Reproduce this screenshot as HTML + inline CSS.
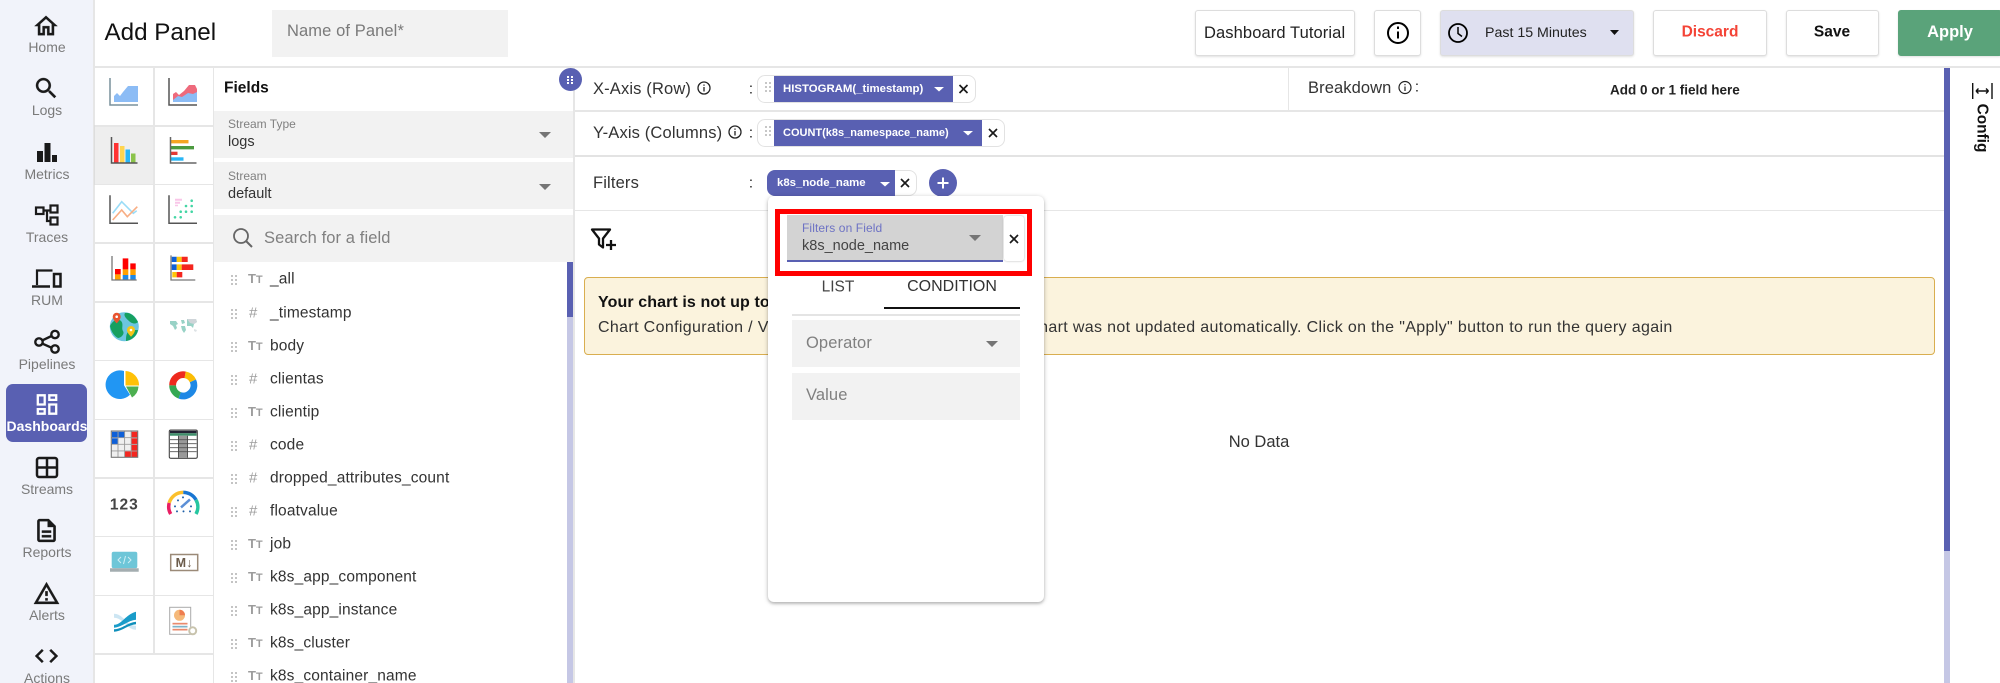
<!DOCTYPE html>
<html lang="en"><head><meta charset="utf-8"><title>Add Panel</title>
<style>
html,body{margin:0;padding:0;background:#fff}
#p{position:relative;width:2000px;height:683px;overflow:hidden;background:#fff;font-family:"Liberation Sans",sans-serif;color:#222;filter:blur(.35px)}
.a{position:absolute}
.t{position:absolute;white-space:nowrap;line-height:1;transform:translateY(-50%)}
.c{transform:translate(-50%,-50%)}
.btn{position:absolute;top:10px;height:46px;box-sizing:border-box;border:1px solid #ddd;border-radius:3px;background:#fff;box-shadow:0 1px 2px rgba(0,0,0,.12)}
.nav{position:absolute;left:0;width:94px;text-align:center;font-size:14px;line-height:1;color:#7a7a7a;transform:translateY(-50%)}
.f{font-size:15.5px;letter-spacing:.15px;color:#333}
.g{font-size:13px;color:#9c9c9c}
.box{position:absolute;background:#f2f2f2}
.chip{position:absolute;background:#5960b2;color:#fff;font-size:11.4px;font-weight:bold}
svg{position:absolute;left:0;top:0;overflow:visible}
</style></head><body><div id="p">

<div class="a" style="left:0;top:0;width:93px;height:683px;background:#f1f3fa;border-right:2px solid #e6e6e6"></div>
<div class="a" style="left:6px;top:384px;width:81px;height:58px;background:#5960b2;border-radius:7px"></div>

<div class="nav" style="top:47px">Home</div>
<div class="nav" style="top:110px">Logs</div>
<div class="nav" style="top:174px">Metrics</div>
<div class="nav" style="top:237px">Traces</div>
<div class="nav" style="top:300px">RUM</div>
<div class="nav" style="top:364px">Pipelines</div>
<div class="nav" style="top:426px;color:#fff;font-weight:bold;font-size:14px">Dashboards</div>
<div class="nav" style="top:489px">Streams</div>
<div class="nav" style="top:552px">Reports</div>
<div class="nav" style="top:615px">Alerts</div>
<div class="nav" style="top:678px">Actions</div>

<!-- header -->
<div class="t" style="left:104.500px;top:33px;font-size:24.200px;color:#111">Add Panel</div>
<div class="box" style="left:272px;top:10px;width:236px;height:47px"></div>
<div class="t" style="left:287px;top:31px;font-size:16.500px;letter-spacing:.1px;color:#7a7a7a">Name of Panel*</div>
<div class="a" style="left:94px;top:66px;width:1906px;height:2px;background:#e6e6e6"></div>

<div class="btn" style="left:1195px;width:160px"></div>
<div class="t" style="left:1204px;top:33px;font-size:16.500px;letter-spacing:.1px;color:#222">Dashboard Tutorial</div>
<div class="btn" style="left:1374px;width:47px"></div>
<div class="btn" style="left:1440px;width:194px;background:#dfe0f0"></div>
<div class="t" style="left:1485px;top:33px;font-size:14.200px;color:#222">Past 15 Minutes</div>
<div class="btn" style="left:1653px;width:114px"></div>
<div class="t c" style="left:1710px;top:32px;font-size:15.500px;font-weight:bold;color:#f44336">Discard</div>
<div class="btn" style="left:1786px;width:93px"></div>
<div class="t c" style="left:1832px;top:32px;font-size:15.500px;font-weight:bold;color:#111">Save</div>
<div class="btn" style="left:1898px;width:104px;background:#5aa37a;border-color:#5aa37a"></div>
<div class="t c" style="left:1950px;top:32px;font-size:16.500px;font-weight:bold;color:#fff">Apply</div>

<!-- grid lines -->
<div class="a" style="left:95px;top:68px;width:119px;height:587px;border-bottom:2px solid #e6e6e6;box-sizing:border-box"></div>
<div class="a" style="left:95px;top:126px;width:58px;height:58px;background:#eee;outline:1px solid #ddd"></div>
<div class="a" style="left:152.500px;top:68px;width:2px;height:587px;background:#e6e6e6"></div>
<div class="a" style="left:212.500px;top:68px;width:1.500px;height:615px;background:#e6e6e6"></div>
<div class="a" style="left:95px;top:125px;width:118px;height:1.600px;background:#e6e6e6"></div>
<div class="a" style="left:95px;top:183.700px;width:118px;height:1.600px;background:#e6e6e6"></div>
<div class="a" style="left:95px;top:242.400px;width:118px;height:1.600px;background:#e6e6e6"></div>
<div class="a" style="left:95px;top:301px;width:118px;height:1.600px;background:#e6e6e6"></div>
<div class="a" style="left:95px;top:359.800px;width:118px;height:1.600px;background:#e6e6e6"></div>
<div class="a" style="left:95px;top:418.500px;width:118px;height:1.600px;background:#e6e6e6"></div>
<div class="a" style="left:95px;top:477.200px;width:118px;height:1.600px;background:#e6e6e6"></div>
<div class="a" style="left:95px;top:535.900px;width:118px;height:1.600px;background:#e6e6e6"></div>
<div class="a" style="left:95px;top:594.600px;width:118px;height:1.600px;background:#e6e6e6"></div>

<!-- fields -->
<div class="t" style="left:224px;top:88px;font-size:15.500px;font-weight:bold;color:#111">Fields</div>
<div class="box" style="left:214px;top:111px;width:359px;height:47px"></div>
<div class="box" style="left:214px;top:162px;width:359px;height:47px"></div>
<div class="box" style="left:214px;top:215px;width:359px;height:47px"></div>
<div class="t" style="left:228px;top:124px;font-size:12px;color:#808080">Stream Type</div>
<div class="t" style="left:228px;top:141.500px;font-size:14.500px;color:#333">logs</div>
<div class="t" style="left:228px;top:176px;font-size:12px;color:#808080">Stream</div>
<div class="t" style="left:228px;top:194px;font-size:14.500px;color:#333">default</div>
<div class="t" style="left:264px;top:238px;font-size:16.500px;letter-spacing:.1px;color:#808080">Search for a field</div>
<div class="a" style="left:567px;top:262px;width:6px;height:421px;background:#c5c7e5"></div>
<div class="a" style="left:567px;top:262px;width:6px;height:55px;background:#5960b2"></div>
<div class="a" style="left:573px;top:68px;width:2px;height:615px;background:#e6e6e6"></div>
<div class="a" style="left:559px;top:68px;width:23px;height:23px;border-radius:50%;background:#5960b2"></div>

<div class="t g" style="left:248px;top:279px;font-weight:bold">T<small>T</small></div><div class="t f" style="left:270px;top:279px">_all</div>
<div class="t g" style="left:249px;top:313px;font-size:15px">#</div><div class="t f" style="left:270px;top:312.500px">_timestamp</div>
<div class="t g" style="left:248px;top:346px;font-weight:bold">T<small>T</small></div><div class="t f" style="left:270px;top:346px">body</div>
<div class="t g" style="left:249px;top:379px;font-size:15px">#</div><div class="t f" style="left:270px;top:379px">clientas</div>
<div class="t g" style="left:248px;top:412px;font-weight:bold">T<small>T</small></div><div class="t f" style="left:270px;top:412px">clientip</div>
<div class="t g" style="left:249px;top:445px;font-size:15px">#</div><div class="t f" style="left:270px;top:445px">code</div>
<div class="t g" style="left:249px;top:478px;font-size:15px">#</div><div class="t f" style="left:270px;top:478px">dropped_attributes_count</div>
<div class="t g" style="left:249px;top:511px;font-size:15px">#</div><div class="t f" style="left:270px;top:511px">floatvalue</div>
<div class="t g" style="left:248px;top:544px;font-weight:bold">T<small>T</small></div><div class="t f" style="left:270px;top:544px">job</div>
<div class="t g" style="left:248px;top:577px;font-weight:bold">T<small>T</small></div><div class="t f" style="left:270px;top:577px">k8s_app_component</div>
<div class="t g" style="left:248px;top:610px;font-weight:bold">T<small>T</small></div><div class="t f" style="left:270px;top:610px">k8s_app_instance</div>
<div class="t g" style="left:248px;top:643px;font-weight:bold">T<small>T</small></div><div class="t f" style="left:270px;top:643px">k8s_cluster</div>
<div class="t g" style="left:248px;top:676px;font-weight:bold">T<small>T</small></div><div class="t f" style="left:270px;top:676px">k8s_container_name</div>

<!-- query rows -->
<div class="a" style="left:575px;top:110px;width:1369px;height:1.500px;background:#e6e6e6"></div>
<div class="a" style="left:575px;top:154.500px;width:1369px;height:2px;background:#e3e3e3"></div>
<div class="a" style="left:575px;top:209.500px;width:1369px;height:1.500px;background:#e6e6e6"></div>
<div class="a" style="left:1288px;top:68px;width:1px;height:42px;background:#e6e6e6"></div>
<div class="a" style="left:1944px;top:68px;width:6px;height:483px;background:#5960b2"></div>
<div class="a" style="left:1944px;top:551px;width:6px;height:132px;background:#c5c7e5"></div>

<div class="t" style="left:593px;top:88.500px;font-size:16.500px;letter-spacing:.15px;color:#333">X-Axis (Row)</div>
<div class="t c" style="left:751px;top:89px;font-size:15px">:</div>
<div class="t" style="left:593px;top:132.500px;font-size:16.500px;letter-spacing:.15px;color:#333">Y-Axis (Columns)</div>
<div class="t c" style="left:751px;top:133px;font-size:15px">:</div>
<div class="t" style="left:593px;top:183px;font-size:16.500px;letter-spacing:.15px;color:#333">Filters</div>
<div class="t c" style="left:751px;top:183px;font-size:15px">:</div>
<div class="t" style="left:1308px;top:87.500px;font-size:16.500px;letter-spacing:.1px;color:#333">Breakdown</div>
<div class="t c" style="left:1417px;top:87px;font-size:15px">:</div>
<div class="t" style="left:1610px;top:90px;font-size:13.500px;font-weight:bold;color:#222">Add 0 or 1 field here</div>

<div class="a" style="left:757px;top:75px;width:219px;height:28px;box-sizing:border-box;border:1.500px solid #e2e2e2;border-radius:8px"></div>
<div class="chip" style="left:774px;top:75.500px;width:179px;height:26.500px;line-height:26.500px;text-indent:9px">HISTOGRAM(_timestamp)</div>
<div class="a" style="left:757px;top:119px;width:248px;height:28px;box-sizing:border-box;border:1.500px solid #e2e2e2;border-radius:8px"></div>
<div class="chip" style="left:774px;top:119.500px;width:208px;height:26.500px;line-height:26.500px;text-indent:9px;font-size:11px">COUNT(k8s_namespace_name)</div>
<div class="a" style="left:767px;top:170px;width:150px;height:26px;box-sizing:border-box;border:1.500px solid #e2e2e2;border-radius:8px"></div>
<div class="chip" style="left:767px;top:170px;width:128px;height:26px;line-height:26px;text-indent:10px;border-radius:8px 0 0 8px">k8s_node_name</div>
<div class="a" style="left:929px;top:169px;width:28px;height:28px;border-radius:50%;background:#5960b2"></div>

<!-- banner -->
<div class="a" style="left:584px;top:277px;width:1351px;height:78px;box-sizing:border-box;background:#fbf3dd;border:1.500px solid #d9ae4f;border-radius:4px"></div>
<div class="t" style="left:598px;top:303px;font-size:16px;letter-spacing:.1px;font-weight:bold;color:#111">Your chart is not up to date</div>
<div class="t" style="left:598px;top:327.500px;font-size:16px;letter-spacing:.35px;color:#333">Chart Configuration / Variables has been updated, but the chart was not updated automatically. Click on the "Apply" button to run the query again</div>
<div class="t c" style="left:1259px;top:442px;font-size:16.500px;color:#333">No Data</div>

<!-- popup -->
<div class="a" style="left:768px;top:196px;width:276px;height:406px;background:#fff;border-radius:6px;box-shadow:0 1px 5px rgba(0,0,0,.25),0 2px 2px rgba(0,0,0,.12)"></div>
<div class="a" style="left:787px;top:215px;width:216px;height:47px;background:#d3d3d3"></div>
<div class="a" style="left:787px;top:260px;width:216px;height:2px;background:#5960b2"></div>
<div class="a" style="left:1004px;top:216px;width:20px;height:45px;box-sizing:border-box;background:#fff;border-radius:3px;box-shadow:0 0 2px rgba(0,0,0,.3)"></div>
<div class="a" style="left:775px;top:209px;width:257px;height:67px;box-sizing:border-box;border:5px solid #f00"></div>
<div class="t" style="left:802px;top:228px;font-size:12px;letter-spacing:.1px;color:#6d72c4">Filters on Field</div>
<div class="t" style="left:802px;top:246px;font-size:14.500px;color:#444">k8s_node_name</div>
<div class="t c" style="left:838px;top:287px;font-size:15.500px;color:#444">LIST</div>
<div class="t c" style="left:952px;top:287px;font-size:16px;color:#333">CONDITION</div>
<div class="a" style="left:884px;top:307px;width:136px;height:2px;background:#111"></div>
<div class="a" style="left:792px;top:314px;width:228px;height:1.500px;background:#e4e4e4"></div>
<div class="box" style="left:792px;top:320px;width:228px;height:47px"></div>
<div class="box" style="left:792px;top:373px;width:228px;height:47px"></div>
<div class="t" style="left:806px;top:343px;font-size:16.500px;letter-spacing:.1px;color:#808080">Operator</div>
<div class="t" style="left:806px;top:395px;font-size:16.500px;letter-spacing:.1px;color:#808080">Value</div>

<!-- config -->
<div class="t" style="left:1982px;top:127.500px;font-size:15.400px;font-weight:bold;color:#111;transform:translate(-50%,-50%) rotate(90deg)">Config</div>

<svg width="2000" height="683" viewBox="0 0 2000 683">
<!-- nav icons -->
<g fill="#1a1a1a" stroke="#1a1a1a" stroke-width=".25">
<path transform="translate(32.200 12.300) scale(1.150)" d="M12 5.690l5 4.500V18h-2v-6H9v6H7v-7.810l5-4.500M12 3L2 12h3v8h6v-6h2v6h6v-8h3L12 3z"/>
<path transform="translate(32.500 74.500) scale(1.150)" d="M15.500 14h-.79l-.28-.27C15.410 12.590 16 11.110 16 9.500 16 5.910 13.090 3 9.500 3S3 5.910 3 9.500 5.910 16 9.500 16c1.610 0 3.090-.59 4.230-1.570l.27.280v.79l5 4.990L20.490 19l-4.990-5zm-6 0C7.010 14 5 11.990 5 9.500S7.010 5 9.500 5 14 7.010 14 9.500 11.990 14 9.500 14z"/>
<path stroke="none" d="M37 151h6v11h-6zM44.500 143h6v19h-6zM52 155h5v7h-5z"/>
</g>
<g fill="none" stroke="#1a1a1a" stroke-width="2.200">
<rect x="36" y="207.500" width="7.500" height="6.500"/><rect x="50.500" y="205.500" width="7" height="7"/><rect x="50.500" y="217.500" width="7" height="7"/><path d="M43.500 210.500h7M47 210.500v10.500h3.500"/>
<path d="M37 285V270.500h15.500"/><path d="M32 286.500h18" stroke-width="2.500"/><rect x="54" y="274" width="6.500" height="12.500" stroke-width="2.500"/>
<circle cx="39" cy="342" r="3.700" stroke-width="2.400"/><circle cx="55" cy="334.500" r="3.700" stroke-width="2.400"/><circle cx="55" cy="349" r="3.700" stroke-width="2.400"/><path d="M42.500 340.300l9-4.300M42.500 343.700l9 4" stroke-width="2.400"/>
<rect x="37" y="458" width="20" height="19" rx="2" stroke-width="2.500"/><path d="M47 458v19M37 467.500h20" stroke-width="2.500"/>
</g>
<path transform="translate(33.200 390.700) scale(1.150)" fill="#fff" d="M19 5v2h-4V5h4M9 5v6H5V5h4m10 8v6h-4v-6h4M9 17v2H5v-2h4M21 3h-8v6h8V3zM11 3H3v10h8V3zm10 8h-8v10h8V11zm-10 4H3v6h8v-6z"/>
<g fill="#1a1a1a" stroke="#1a1a1a" stroke-width=".25">
<path transform="translate(32.700 516.700) scale(1.150)" d="M8 16h8v2H8zm0-4h8v2H8zm6-10H6c-1.100 0-2 .9-2 2v16c0 1.100.89 2 1.990 2H18c1.100 0 2-.9 2-2V8l-6-6zm4 18H6V4h7v5h5v11z"/>
<path transform="translate(32.700 579.800) scale(1.150)" d="M12 5.990L19.530 19H4.470L12 5.990M12 2L1 21h22L12 2zm1 14h-2v2h2v-2zm0-6h-2v4h2v-4z"/>
<path transform="translate(32.700 642.200) scale(1.150)" d="M9.400 16.600L4.800 12l4.600-4.600L8 6l-6 6 6 6 1.400-1.400zm5.200 0l4.600-4.600-4.600-4.600L16 6l6 6-6 6-1.400-1.400z"/>
</g>

<!-- chart icons, rows -->
<g transform="translate(95 68)"><path d="M19 28l3-3 3 3 3-4 5-6h10v16H19z" fill="#8cbcf5"/><path d="M15 10v27h28" fill="none" stroke="#78909c" stroke-width="1.500"/></g>
<g transform="translate(154 68)"><path d="M19 26l3-2 3 3 5-4 5-6h6l2 4v13H19z" fill="#ee6a7c"/><path d="M19 32l5-4 4 1 6-4 5 1 4-2v10H19z" fill="#8cbcf5"/><path d="M15 10v27h28" fill="none" stroke="#555" stroke-width="1.500"/></g>

<g transform="translate(95 126)"><path d="M19 17h4.500v20H19z" fill="#f33"/><path d="M25 20h4.500v17H25z" fill="#ffd54f"/><path d="M30.500 23.500H35V37h-4.500z" fill="#29b6f6"/><path d="M36 27.500h4.500V37H36z" fill="#8bc34a"/><path d="M16.500 11v26h26" fill="none" stroke="#555" stroke-width="1.500"/></g>
<g transform="translate(154 126)"><path d="M17 14h17.500v3.400H17z" fill="#f5a623"/><path d="M17 20h23v3.400H17z" fill="#4c9a3f"/><path d="M17 25.700h6.500V29H17z" fill="#e53935"/><path d="M17 31.300h12.500v3.400H17z" fill="#29b6f6"/><path d="M16.500 11v26h26" fill="none" stroke="#666" stroke-width="1.500"/></g>

<g transform="translate(95 184.700)"><path d="M15 10.500V38.500h28" fill="none" stroke="#555" stroke-width="1.500"/><path d="M17.700 28.600l9-11.600 11.600 11.600 3.400-2.600" fill="none" stroke="#9adcf7" stroke-width="1.600"/><path d="M17.700 35.300l9-10 5.600 6.700 10-10" fill="none" stroke="#f8ae84" stroke-width="1.600"/></g>
<g transform="translate(154 184.700)"><path d="M15 10.500V38.500h28" fill="none" stroke="#555" stroke-width="1.500"/><path d="M21 14h7v2h-7zM21 17h5v2h-5zM21 20h3v1.500h-3z" fill="#f9c6e8"/><g fill="#43d6a4"><circle cx="37.700" cy="16" r="1.300"/><circle cx="32" cy="21.300" r="1.300"/><circle cx="37.700" cy="21.300" r="1.300"/><circle cx="26.700" cy="27" r="1.300"/><circle cx="32" cy="27" r="1.300"/><circle cx="37.700" cy="27" r="1.300"/><circle cx="21" cy="32.600" r="1.300"/><circle cx="26.700" cy="32.600" r="1.300"/></g></g>

<g transform="translate(95 243.400)"><path d="M20 25.600h5.700V31H20z" fill="#f00"/><path d="M20 31h5.700v5.600H20z" fill="#ffa000"/><path d="M27.700 15h5.600v11h-5.600z" fill="#f00"/><path d="M27.700 26h5.600v5.600h-5.600z" fill="#ffa000"/><path d="M27.700 31.600h5.600v5h-5.600z" fill="#1e88e5"/><path d="M35.300 20h5.400v6h-5.400z" fill="#f00"/><path d="M35.300 26h5.400v5.600h-5.400z" fill="#ffa000"/><path d="M35.300 31.600h5.400v5h-5.400z" fill="#1e88e5"/><path d="M17 12.600v24h24.700" fill="none" stroke="#777" stroke-width="1.300"/></g>
<g transform="translate(154 243.400)"><path d="M17.700 13.300h5v5.300h-5zM17.700 21h5v5.600h-5z" fill="#0d5fd8"/><path d="M22.700 13.300h5v5.300h-5zM22.700 21h5v5.600h-5zM18.300 28.600h4.400V34h-4.400z" fill="#fdc60a"/><path d="M27.700 13.300h6v5.300h-6zM27.700 21h11.600v5.600H27.700zM22.700 28.600h5.600V34h-5.600z" fill="#f4261f"/><path d="M17 12v24.600h24.300" fill="none" stroke="#777" stroke-width="1.300"/></g>

<g transform="translate(95 302)"><circle cx="29.300" cy="24.700" r="14.500" fill="#6cc5e0"/><path d="M15 24c3-6 8-8 11-5s0 7 2 10-2 7-5 7c-4-2-7-7-8-12zM30 11c5-1 10 3 13 9-3 3-7 1-9-1s-6-5-4-8zM33 30c3-2 7-2 10-2-1 6-6 10-12 11 0-3 0-7 2-9z" fill="#15a060"/><path d="M17.700 14.700a4 4 0 0 1 8 0c0 3-4 6.600-4 6.600s-4-3.600-4-6.600z" fill="#e8542f"/><path d="M32 28a4 4 0 0 1 8 0c0 3-4 6.700-4 6.700s-4-3.700-4-6.700z" fill="#f5c518"/><circle cx="21.700" cy="14.700" r="1.300" fill="#fff"/><circle cx="36" cy="28" r="1.300" fill="#fff"/></g>
<g transform="translate(154 302)" opacity=".8"><path d="M16 19h6l2 3-2 1 1 3-2 2-2-4-3-2zM27 18h3l1 3-3 1zM27 24h4l1 4-2 3-2-3zM33 17h9l1 3-3 2-1 4-2-2-4 0z" fill="#7fc7b8"/><path d="M33 17h9l1 3-3 2-4-1z" fill="#c4cbd0"/><path d="M40 27l3 1-1 2-2-1z" fill="#d6dde0"/></g>

<g transform="translate(95 361)"><path d="M29 10v14.300l6 9.500a14.300 14.300 0 1 1-6-23.800z" fill="#2196f3"/><path d="M30.500 10a14 14 0 0 1 13.500 14.500H30.500z" fill="#ffc107"/><path d="M31 25.500h12.500a14 14 0 0 1-6.500 11z" fill="#4caf50"/></g>
<g transform="translate(154 361)" fill="none" stroke-width="6.800"><path d="M25.700 34.400A10.700 10.700 0 0 1 18.600 24.300" stroke="#34a853"/><path d="M38.900 19.800A10.700 10.700 0 0 1 25.700 34.400" stroke="#1e88e5"/><path d="M31.100 13.800A10.700 10.700 0 0 1 38.900 19.800" stroke="#fbbc04"/><path d="M18.600 24.300A10.700 10.700 0 0 1 31.100 13.800" stroke="#ee2a1e"/></g>

<g transform="translate(95 419.700)"><rect x="16.300" y="11.300" width="26.400" height="26.300" fill="#fff"/><path d="M17 12h6v6h-6zM23.500 12h6v6h-6zM17 18.500h6v6h-6z" fill="#0d5fd8"/><path d="M36.500 12h6v6h-6zM36.500 18.500h6v6h-6zM36.500 25h6v6h-6zM36.500 31.500h6v6h-6zM30 31.500h6v6h-6z" fill="#f4261f"/><path d="M17 25h6v6h-6zM23.500 18.500h6v6h-6zM30 18.500h6v6h-6zM23.500 25h6v6h-6zM30 25h6v6h-6zM17 31.500h6v6h-6zM23.500 31.500h6v6h-6zM30 12h6v6h-6z" fill="#efefef"/><path d="M23 11.500v26M29.600 11.500v26M36.200 11.500v26M16.500 18h26M16.500 24.600h26M16.500 31.200h26" stroke="#9a9a9a" stroke-width=".9"/><rect x="16.300" y="11.300" width="26.400" height="26.300" fill="none" stroke="#777" stroke-width="1.100"/></g>
<g transform="translate(154 419.700)"><rect x="15.300" y="10.300" width="28" height="28.300" rx="1.500" fill="#fff" stroke="#444" stroke-width="1.100"/><path d="M16 11h26.600v2.600H16z" fill="#223"/><path d="M16 13.600h26.600v2.400H16z" fill="#3f8f6b"/><path d="M24.500 16h9v22h-9z" fill="#999"/><path d="M16 20h26.600M16 24h26.600M16 28h26.600M16 32h26.600" stroke="#555" stroke-width=".9"/><path d="M24.500 16v22M33.500 16v22" stroke="#444" stroke-width=".9"/></g>

<g transform="translate(154 478.400)" fill="none" stroke-width="3.500"><path d="M16.700 35.600A14.500 14.500 0 0 1 15.200 24.500" stroke="#e91e63"/><path d="M15.200 24.500A14.500 14.500 0 0 1 29.300 14" stroke="#fbc02d"/><path d="M29.300 14A14.500 14.500 0 0 1 42 21.500" stroke="#1976d2"/><path d="M42 21.500A14.500 14.500 0 0 1 42 35.600" stroke="#26c6a0"/><path d="M27 29l9-8" stroke="#5c8fd6" stroke-width="2.500"/><g fill="#1e5fa8" stroke="none"><circle cx="21" cy="28" r="1"/><circle cx="24" cy="22" r="1"/><circle cx="29" cy="19" r="1"/><circle cx="23" cy="33" r="1"/><circle cx="37" cy="28" r="1"/><circle cx="36" cy="33" r="1"/><circle cx="29.500" cy="33" r="1"/></g></g>
<g transform="translate(95 537)"><rect x="16.700" y="14.700" width="25.600" height="16.600" rx="2" fill="#6ec6d8"/><path d="M15 31.300h28.700v3.400H15z" fill="#a4adb0"/><path d="M26 20l-3 3 3 3M33 20l3 3-3 3M30.500 19l-2 8" fill="none" stroke="#cfeef4" stroke-width="1"/></g>
<g transform="translate(154 537)"><rect x="16.700" y="17.500" width="27" height="16" fill="#fff" stroke="#9b8a78" stroke-width="1.500"/></g>
<g transform="translate(95 595.800)"><path d="M19 18C28 18 32 30 41 30v4C32 34 28 22 19 22z" fill="#cde6f3"/><path d="M19 29C27 29 30 19 41 16v8C32 25 28 31 19 32z" fill="#1a9cc9"/><path d="M19 33.500C27 33.500 32 27 41 26v2.500C32 29.500 27 35.500 19 36z" fill="#0f8fbb"/></g>
<g transform="translate(154 595.800)"><rect x="15.700" y="11.500" width="21" height="27" fill="#fff" stroke="#aaa" stroke-width="1"/><circle cx="25.500" cy="19.500" r="5.500" fill="#f5b97a"/><path d="M25.500 19.500v-5.500a5.500 5.500 0 0 1 5.500 5.500z" fill="#ee7d4f"/><path d="M18.500 27h15v1.700h-15z" fill="#e98a6d"/><path d="M18.500 30h15v1.700h-15z" fill="#7fb3c8"/><path d="M18.500 33h15v1.700h-15z" fill="#e98a6d"/><circle cx="38.700" cy="35" r="3.500" fill="#fff" stroke="#c8c3ad" stroke-width="2"/></g>

<!-- search, carets -->
<circle cx="241" cy="236" r="7" fill="none" stroke="#666" stroke-width="1.800"/><path d="M246 241l6 6" stroke="#666" stroke-width="2"/>
<g fill="#757575"><path d="M539 132h12l-6 6zM539 184h12l-6 6zM969 235h12l-6 6zM986 341h12l-6 6z"/></g>
<path d="M1610 30h9l-4.500 5z" fill="#111"/>
<g fill="#fff"><path d="M934 87h10l-5 4.500zM963 131h10l-5 4.500zM880 182h10l-5 4.500z"/></g>
<path d="M943 177.500v11M937.500 183h11" stroke="#fff" stroke-width="2"/>

<!-- close X -->
<g stroke="#1a1a1a" stroke-width="1.700" fill="none"><path d="M959.500 85l8 8M967.500 85l-8 8M989 129l8 8M997 129l-8 8M901 179l8 8M909 179l-8 8M1010 235l8 8M1018 235l-8 8"/></g>

<!-- grip dots -->
<g fill="#b5b5b5"><circle cx="766" cy="83" r="1"/><circle cx="770" cy="83" r="1"/><circle cx="766" cy="87" r="1"/><circle cx="770" cy="87" r="1"/><circle cx="766" cy="91" r="1"/><circle cx="770" cy="91" r="1"/><circle cx="766" cy="127" r="1"/><circle cx="770" cy="127" r="1"/><circle cx="766" cy="131" r="1"/><circle cx="770" cy="131" r="1"/><circle cx="766" cy="135" r="1"/><circle cx="770" cy="135" r="1"/></g>
<g fill="#c4c4c4">
<path d="M231 275h2v2h-2zM235 275h2v2h-2zM231 279h2v2h-2zM235 279h2v2h-2zM231 283h2v2h-2zM235 283h2v2h-2z"/>
<path transform="translate(0 34)" d="M231 275h2v2h-2zM235 275h2v2h-2zM231 279h2v2h-2zM235 279h2v2h-2zM231 283h2v2h-2zM235 283h2v2h-2z"/>
<path transform="translate(0 67)" d="M231 275h2v2h-2zM235 275h2v2h-2zM231 279h2v2h-2zM235 279h2v2h-2zM231 283h2v2h-2zM235 283h2v2h-2z"/>
<path transform="translate(0 100)" d="M231 275h2v2h-2zM235 275h2v2h-2zM231 279h2v2h-2zM235 279h2v2h-2zM231 283h2v2h-2zM235 283h2v2h-2z"/>
<path transform="translate(0 133)" d="M231 275h2v2h-2zM235 275h2v2h-2zM231 279h2v2h-2zM235 279h2v2h-2zM231 283h2v2h-2zM235 283h2v2h-2z"/>
<path transform="translate(0 166)" d="M231 275h2v2h-2zM235 275h2v2h-2zM231 279h2v2h-2zM235 279h2v2h-2zM231 283h2v2h-2zM235 283h2v2h-2z"/>
<path transform="translate(0 199)" d="M231 275h2v2h-2zM235 275h2v2h-2zM231 279h2v2h-2zM235 279h2v2h-2zM231 283h2v2h-2zM235 283h2v2h-2z"/>
<path transform="translate(0 232)" d="M231 275h2v2h-2zM235 275h2v2h-2zM231 279h2v2h-2zM235 279h2v2h-2zM231 283h2v2h-2zM235 283h2v2h-2z"/>
<path transform="translate(0 265)" d="M231 275h2v2h-2zM235 275h2v2h-2zM231 279h2v2h-2zM235 279h2v2h-2zM231 283h2v2h-2zM235 283h2v2h-2z"/>
<path transform="translate(0 298)" d="M231 275h2v2h-2zM235 275h2v2h-2zM231 279h2v2h-2zM235 279h2v2h-2zM231 283h2v2h-2zM235 283h2v2h-2z"/>
<path transform="translate(0 331)" d="M231 275h2v2h-2zM235 275h2v2h-2zM231 279h2v2h-2zM235 279h2v2h-2zM231 283h2v2h-2zM235 283h2v2h-2z"/>
<path transform="translate(0 364)" d="M231 275h2v2h-2zM235 275h2v2h-2zM231 279h2v2h-2zM235 279h2v2h-2zM231 283h2v2h-2zM235 283h2v2h-2z"/>
<path transform="translate(0 397)" d="M231 275h2v2h-2zM235 275h2v2h-2zM231 279h2v2h-2zM235 279h2v2h-2zM231 283h2v2h-2zM235 283h2v2h-2z"/>
</g>
<g fill="#fff"><path d="M567 76h2v2h-2zM571 76h2v2h-2zM567 79h2v2h-2zM571 79h2v2h-2zM567 82h2v2h-2zM571 82h2v2h-2z"/></g>

<!-- info icons -->
<g fill="none" stroke="#222"><circle cx="704" cy="88" r="6" stroke-width="1.300"/><path d="M704 87v4.500M704 84.500v1.300" stroke-width="1.300"/>
<circle cx="735" cy="132" r="6" stroke-width="1.300"/><path d="M735 131v4.500M735 128.500v1.300" stroke-width="1.300"/>
<circle cx="1405" cy="87.500" r="6" stroke-width="1.200"/><path d="M1405 86.500v4.500M1405 84v1.300" stroke-width="1.200"/>
<circle cx="1398" cy="33" r="10" stroke="#000" stroke-width="2"/><path d="M1398 31.500v7M1398 26.500v2.500" stroke="#000" stroke-width="2"/>
<circle cx="1458" cy="33" r="9" stroke="#000" stroke-width="1.800"/><path d="M1458 27v6.500l4 3" stroke="#000" stroke-width="1.500"/></g>

<!-- filter plus icon -->
<path d="M592 229.500h18l-7 9v9l-4-3v-6z" fill="none" stroke="#111" stroke-width="2.300" stroke-linejoin="round"/>
<path d="M611 240v10M606 245h10" stroke="#111" stroke-width="2.300"/>

<!-- config icon -->
<path d="M1972.700 83v16M1992 83v16M1976 91h12.500M1976 91l2.500-2.500M1976 91l2.500 2.500M1988.500 91l-2.500-2.500M1988.500 91l-2.500 2.500" fill="none" stroke="#111" stroke-width="1.400"/>

<text x="124.300" y="509.500" text-anchor="middle" font-family="Liberation Sans, sans-serif" font-weight="bold" font-size="15.500" letter-spacing="1" fill="#444">123</text>
<text x="184" y="567" text-anchor="middle" font-family="Liberation Sans, sans-serif" font-weight="bold" font-size="12.500" fill="#6b5b4a">M↓</text>
</svg>
</div></body></html>
